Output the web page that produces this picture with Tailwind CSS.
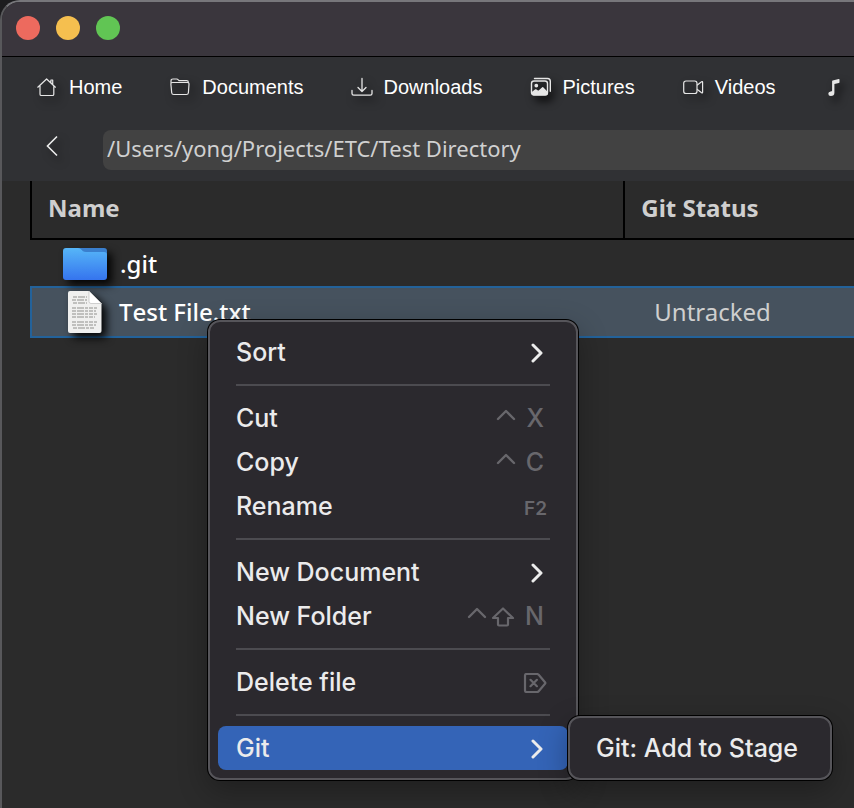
<!DOCTYPE html>
<html lang="en">
<head>
<meta charset="utf-8">
<meta name="viewport" content="width=device-width, initial-scale=1">
<title>Test Directory</title>
<script src="https://cdn.jsdelivr.net/npm/@tailwindcss/browser@4"></script>
</head>
<body class="bg-[#1c1c1e]">
<div class="relative flex min-h-screen flex-col overflow-hidden rounded-tl-[20px] border-t-2 border-l-2 border-t-[#77777b] border-l-[#58585b] bg-[#2b2b2b]">

  <header class="flex h-[54px] items-center gap-4 bg-[#3a363d] px-[14px] pb-0.5">
    <button type="button" aria-label="Close" class="size-6 rounded-full bg-[#ed6a5e]"></button>
    <button type="button" aria-label="Minimize" class="size-6 rounded-full bg-[#f5bf4f]"></button>
    <button type="button" aria-label="Zoom" class="size-6 rounded-full bg-[#61c554]"></button>
  </header>

  <div class="border-t border-black bg-[#303134] pb-[11px]">
    <nav aria-label="Places" class="flex h-[61px] items-center overflow-hidden pb-0.5 pl-[11px] font-['Liberation_Sans',Arial,sans-serif] text-[20px] text-white">
      <a href="#home" class="flex shrink-0 items-center gap-3 px-6">
        <svg class="size-5 overflow-visible drop-shadow-[4px_5px_4px_rgba(0,0,0,0.7)]" viewBox="0 0 20 20" fill="none" stroke="#e6e6e6" stroke-width="1.2" stroke-linejoin="round" stroke-linecap="round"><path d="M.8 10.2 9.6 2l8.800 8.200M3 8.600v8.600q0 1.300 1.300 1.300h11.200q1.300 0 1.300-1.300V8.600M13.900 5.600V3h1.800v4.400"/></svg>
        Home</a>
      <a href="#documents" class="flex shrink-0 items-center gap-3 px-6">
        <svg class="size-5 overflow-visible drop-shadow-[4px_5px_4px_rgba(0,0,0,0.7)]" viewBox="0 0 20 20" fill="none" stroke="#e6e6e6" stroke-width="1.2" stroke-linejoin="round"><path d="M1 6V4q0-2 2-2h3.600q1 0 1.700.9l.7.8h7.600q1.800 0 1.800 1.800v.8M2.500 5.500h14.800q1.800 0 1.700 1.800l-.6 8.400q-.2 1.800-2 1.800H3.700q-1.800 0-2-1.800L.9 7.300q-.1-1.800 1.600-1.800z"/></svg>
        Documents</a>
      <a href="#downloads" class="flex shrink-0 items-center gap-3 px-6">
        <svg class="size-5 overflow-visible drop-shadow-[4px_5px_4px_rgba(0,0,0,0.7)]" viewBox="0 0 20 20" fill="none" stroke="#e6e6e6" stroke-width="1.3" stroke-linejoin="round" stroke-linecap="round"><path d="M10 1.500v13M6 10.500l4 4 4-4M0 13.500v3q0 1.700 1.700 1.700h16.600q1.700 0 1.700-1.700v-3"/></svg>
        Downloads</a>
      <a href="#pictures" class="flex shrink-0 items-center gap-3 px-6">
        <svg class="size-5 overflow-visible drop-shadow-[4px_5px_4px_rgba(0,0,0,0.9)]" viewBox="0 0 20 20" fill="none" stroke="#e6e6e6" stroke-width="1.4" stroke-linejoin="round" stroke-linecap="round"><rect x="1.500" y="4" width="16" height="14" rx="2.500"/><path d="M4.500 1.500h13q2.800 0 2.800 2.800v10"/><circle cx="6.300" cy="8.600" r="1.200" fill="#e6e6e6"/><path d="m2.200 15.500 3.500-2.600 2.600 1.800 4.400-4 4.400 4.600v1.200q0 1-1 1H3.200q-1 0-1-1z" fill="#e6e6e6"/></svg>
        Pictures</a>
      <a href="#videos" class="flex shrink-0 items-center gap-3 px-6">
        <svg class="size-5 overflow-visible drop-shadow-[4px_5px_4px_rgba(0,0,0,0.7)]" viewBox="0 0 20 20" fill="none" stroke="#e6e6e6" stroke-width="1.2" stroke-linejoin="round"><rect x=".7" y="4" width="13.300" height="12.500" rx="2.300"/><path d="m14 8.200 4.600-3.400q1-.6 1 .5v10q0 1.100-1 .5L14 12.300"/></svg>
        Videos</a>
      <a href="#music" aria-label="Music" class="flex shrink-0 items-center gap-3 px-6">
        <svg class="size-5 overflow-visible drop-shadow-[4px_5px_4px_rgba(0,0,0,0.8)]" viewBox="-3.500 0 20 20" fill="#e6e6e6"><path d="M5.200 3.600 11.200 2q.8-.2.800.6v2.600q0 .7-.7.800l-4.400 1.100v8.600q0 3.300-3.600 3.300Q.8 19 .8 16.800q0-2 2.300-2.400l1-.2q.5-.1.500-.8V4.500q0-.7.600-.9z"/></svg>
      </a>
    </nav>

    <div class="flex items-center pt-3">
      <button type="button" aria-label="Back" class="flex h-10 w-[101px] shrink-0 items-center pb-2 pl-11">
        <svg class="h-5 w-3 overflow-visible drop-shadow-[4px_5px_4px_rgba(0,0,0,0.6)]" viewBox="0 0 12 20" fill="none" stroke="#ececec" stroke-width="1.6"><path d="M11 .5 1.500 10l9.500 9.500"/></svg>
      </button>
      <input type="text" aria-label="Path" value="/Users/yong/Projects/ETC/Test Directory" class="h-10 min-w-0 flex-1 rounded-l-lg bg-[#424242] px-1 pb-1 font-['Noto_Sans',sans-serif] text-[22px] text-[#d0d0d0] outline-none">
    </div>
  </div>

  <main class="pl-7 font-['Noto_Sans',sans-serif]">
    <table class="w-[calc(100%+2px)] table-fixed border-collapse text-left text-[24px]">
      <thead>
        <tr class="h-[58px] border-b-2 border-black text-[#cfcfcf]">
          <th scope="col" class="w-[72%] border-l-2 border-black p-0 pb-1 pl-4 font-bold">Name</th>
          <th scope="col" class="border-l-2 border-black p-0 pb-1 pl-4 font-bold">Git Status</th>
        </tr>
      </thead>
      <tbody class="font-medium">
        <tr class="h-12 text-white">
          <td class="p-0 pt-0.5">
            <div class="flex items-center gap-3 pl-[31px]">
              <svg class="h-[34px] w-[46px] overflow-visible drop-shadow-[5px_5px_4px_rgba(0,0,0,0.9)]" viewBox="0 0 46 34"><defs><linearGradient id="folder" x1="0" y1="0" x2="0" y2="1"><stop offset="0" stop-color="#56b6f8"/><stop offset="1" stop-color="#3574ee"/></linearGradient></defs><path d="M10 1h32q3 0 3 3v8H10z" fill="#3a7fce"/><path d="M1 4q0-3 3-3h12q2 0 3.500 1.700L21 4.300Q22 5 24 5h18q3 0 3 3v22q0 3-3 3H4q-3 0-3-3z" fill="url(#folder)"/></svg>
              <span>.git</span>
            </div>
          </td>
          <td class="p-0"></td>
        </tr>
        <tr class="h-[50px] border-2 border-[#23629a] bg-[#46525e]">
          <td class="p-0 text-white">
            <div class="flex items-center gap-4 pl-[35px]">
              <svg class="h-11 w-9 overflow-visible drop-shadow-[5px_5px_4px_rgba(0,0,0,0.95)]" viewBox="0 0 36 44"><path d="M1 3q0-2 2-2h19l12.500 12.500V41q0 2-2 2H3q-2 0-2-2z" fill="#f0f0ef"/><path d="M22 1v10.500q0 2 2 2h10.500z" fill="#fff" stroke="#bdbdbd" stroke-width=".7"/><g fill="none" stroke="#c0c0be" stroke-width="1.800" stroke-dasharray="4 1 7 1 3 1"><path d="M6 7h14M5 10h15M6 13h14"/><path d="M5 18h25M5 21h24M5 24h25M5 27h23M5 32h25M5 35h24M6 38h22"/></g></svg>
              <span class="[font-kerning:none]">Test File.txt</span>
            </div>
          </td>
          <td class="p-0 pl-[30px] font-normal text-[#cfcfcf]">Untracked</td>
        </tr>
      </tbody>
    </table>
  </main>

  <div role="menu" aria-label="File actions" class="absolute top-[318px] left-[206px] w-[370px] rounded-xl border-2 border-[#56555a] bg-[#2b292e] p-2 font-['Inter',sans-serif] text-[25px] font-medium text-[#ebebec] shadow-[0_0_0_1px_#000,0_10px_30px_rgba(0,0,0,0.3)]">
    <button type="button" role="menuitem" class="flex h-11 w-full items-center justify-between rounded-lg pt-0.5 pr-[25px] pl-[18px]">Sort
      <svg class="h-5 w-3" viewBox="0 0 12 20" fill="none" stroke="#ececec" stroke-width="3" stroke-linecap="round" stroke-linejoin="round"><path d="m2 2 8 8-8 8"/></svg></button>
    <hr class="mx-[18px] my-[10px] border-t-2 border-[#4c4b50]">
    <button type="button" role="menuitem" class="flex h-11 w-full items-center justify-between rounded-lg pt-0.5 pr-6 pl-[18px]">Cut
      <span class="flex items-center gap-2.5 text-[#68676c]"><svg class="h-5 w-5" viewBox="0 0 20 20" fill="none" stroke="currentColor" stroke-width="2.4" stroke-linecap="round" stroke-linejoin="round"><path d="m2 10 8-8 8 8"/></svg>X</span></button>
    <button type="button" role="menuitem" class="flex h-11 w-full items-center justify-between rounded-lg pt-0.5 pr-6 pl-[18px]">Copy
      <span class="flex items-center gap-2.5 text-[#68676c]"><svg class="h-5 w-5" viewBox="0 0 20 20" fill="none" stroke="currentColor" stroke-width="2.4" stroke-linecap="round" stroke-linejoin="round"><path d="m2 10 8-8 8 8"/></svg>C</span></button>
    <button type="button" role="menuitem" class="flex h-11 w-full items-center justify-between rounded-lg pt-0.5 pr-[21px] pl-[18px]">Rename
      <span class="pt-1 text-[19px] font-semibold text-[#68676c]">F2</span></button>
    <hr class="mx-[18px] my-[10px] border-t-2 border-[#4c4b50]">
    <button type="button" role="menuitem" class="flex h-11 w-full items-center justify-between rounded-lg pt-0.5 pr-[25px] pl-[18px]">New Document
      <svg class="h-5 w-3" viewBox="0 0 12 20" fill="none" stroke="#ececec" stroke-width="3" stroke-linecap="round" stroke-linejoin="round"><path d="m2 2 8 8-8 8"/></svg></button>
    <button type="button" role="menuitem" class="flex h-11 w-full items-center justify-between rounded-lg pt-0.5 pr-6 pl-[18px]">New Folder
      <span class="flex items-center text-[#68676c]"><svg class="h-5 w-5" viewBox="0 0 20 20" fill="none" stroke="currentColor" stroke-width="2.4" stroke-linecap="round" stroke-linejoin="round"><path d="m2 10 8-8 8 8"/></svg><svg class="mr-2.5 ml-1 h-5 w-6" viewBox="0 0 24 20" fill="none" stroke="currentColor" stroke-width="2.2" stroke-linejoin="round"><path d="M12 1.500 22 11h-5v6.500q0 1-1 1H8q-1 0-1-1V11H2z"/></svg>N</span></button>
    <hr class="mx-[18px] my-[10px] border-t-2 border-[#4c4b50]">
    <button type="button" role="menuitem" class="flex h-11 w-full items-center justify-between rounded-lg pt-0.5 pr-[21px] pl-[18px]">Delete file
      <svg class="h-5 w-6" viewBox="0 0 24 20" fill="none" stroke="#68676c" stroke-width="2.2" stroke-linecap="round" stroke-linejoin="round"><path d="M3.500 1H14q1 0 1.700.8L22 9.200q.7.800 0 1.600l-6.300 7.400Q15 19 14 19H3.500Q2 19 2 17.500v-15Q2 1 3.500 1zM7.500 6.800l6.400 6.400M13.900 6.800l-6.400 6.400"/></svg></button>
    <hr class="mx-[18px] my-[10px] border-t-2 border-[#4c4b50]">
    <button type="button" role="menuitem" class="flex h-11 w-full items-center justify-between rounded-lg bg-[#3464b7] pt-0.5 pr-[25px] pl-[18px]">Git
      <svg class="h-5 w-3" viewBox="0 0 12 20" fill="none" stroke="#ececec" stroke-width="3" stroke-linecap="round" stroke-linejoin="round"><path d="m2 2 8 8-8 8"/></svg></button>
  </div>

  <div role="menu" aria-label="Git" class="absolute top-[714px] left-[566px] w-[264px] rounded-xl border-2 border-[#56555a] bg-[#2b292e] p-2 font-['Inter',sans-serif] text-[25px] font-medium text-[#ebebec] shadow-[0_0_0_1px_#000,0_10px_30px_rgba(0,0,0,0.3)]">
    <button type="button" role="menuitem" class="flex h-11 w-full items-center rounded-lg pt-0.5 pl-[18px] whitespace-nowrap">Git: Add to Stage</button>
  </div>
</div>
</body>
</html>
